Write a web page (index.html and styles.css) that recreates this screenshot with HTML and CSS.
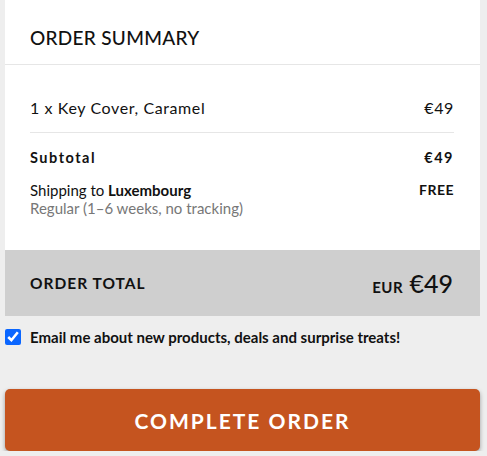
FILE: index.html
```html
<!DOCTYPE html>
<html>
<head>
<meta charset="utf-8">
<link rel="stylesheet" href="styles.css">
</head>
<body>
<div class="page">
  <div class="card">
    <div class="card-header">
      <h2 class="title">ORDER SUMMARY</h2>
    </div>
    <div class="card-body">
      <div class="row item">
        <span>1 x Key Cover, Caramel</span>
        <span>€49</span>
      </div>
      <div class="row subtotal">
        <span>Subtotal</span>
        <span>€49</span>
      </div>
      <div class="row shipping">
        <div class="ship-info">
          <div class="ship-to">Shipping to <b>Luxembourg</b></div>
          <div class="ship-method">Regular (1–6 weeks, no tracking)</div>
        </div>
        <span class="free">FREE</span>
      </div>
    </div>
    <div class="total">
      <span class="total-label">ORDER TOTAL</span>
      <span class="total-value"><span class="currency">EUR</span> €49</span>
    </div>
  </div>
  <label class="optin">
    <input type="checkbox" checked>
    <span>Email me about new products, deals and surprise treats!</span>
  </label>
  <button class="complete">COMPLETE ORDER</button>
</div>
</body>
</html>
```
FILE: styles.css
```css
* { box-sizing: border-box; }
html, body { margin: 0; padding: 0; }
body {
  background: #eeeeee;
  font-family: Lato, "Open Sans", sans-serif;
  color: #111;
}
.page {
  padding: 0 7px 0 5px;
}
.card {
  background: #fff;
}
.card-header {
  height: 65px;
  border-bottom: 1px solid #e6e6e6;
  padding: 0 25px;
  display: flex;
  align-items: flex-end;
}
.title {
  margin: 0 0 14px;
  font-size: 19px;
  font-weight: 500;
  letter-spacing: 0.3px;
  line-height: 24px;
}
.card-body {
  padding: 0 26px 0 25px;
  height: 185px;
}
.row {
  display: flex;
  justify-content: space-between;
}
.item {
  font-size: 16px;
  letter-spacing: 0.6px;
  height: 68px;
  align-items: center;
  padding-top: 18px;
  border-bottom: 1px solid #e6e6e6;
}
.subtotal {
  font-size: 14.5px;
  font-weight: 700;
  letter-spacing: 1.5px;
  padding-top: 15px;
  line-height: 20px;
}
.shipping {
  padding-top: 13px;
  font-size: 15px;
  line-height: 18px;
}
.ship-to { color: #111; }
.ship-to b { font-weight: 700; }
.ship-method { color: #777; }
.free { font-weight: 700; letter-spacing: 0.5px; font-size: 14px; }
.total {
  background: #cfcfcf;
  height: 66px;
  padding: 0 27px 0 25px;
  display: flex;
  justify-content: space-between;
  align-items: center;
}
.total-label {
  font-size: 15.5px;
  font-weight: 700;
  letter-spacing: 1px;
}
.total-value {
  font-size: 25px;
  font-weight: 500;
}
.currency {
  font-size: 15px;
  font-weight: 700;
  letter-spacing: 0.5px;
}
.optin {
  display: flex;
  align-items: center;
  margin-top: 12px;
  font-size: 15px;
  font-weight: 700;
  gap: 9px;
}
.optin input {
  margin: 0;
  width: 16px;
  height: 16px;
  accent-color: #0a66ff;
}
.complete {
  display: block;
  width: 100%;
  margin-top: 43px;
  height: 62px;
  border: none;
  border-radius: 5px;
  background: #c5541f;
  color: #fff;
  font-family: Lato, sans-serif;
  font-size: 21px;
  font-weight: 700;
  letter-spacing: 2px;
  box-shadow: 0 2px 4px rgba(0,0,0,0.35);
}
```
